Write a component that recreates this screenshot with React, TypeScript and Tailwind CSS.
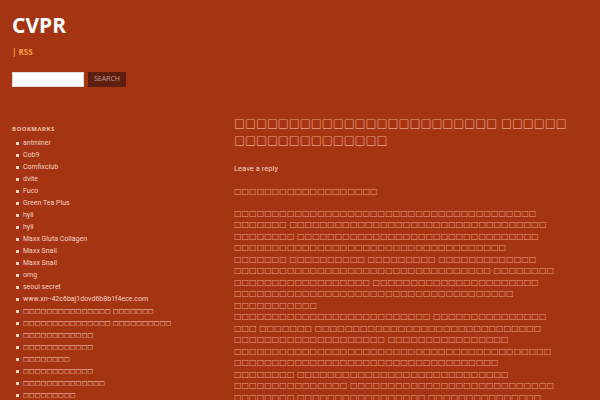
import React from 'react';

// the Thai text shows as missing-glyph boxes in the reference
const box = (...runs: number[]) => runs.map((n) => '□'.repeat(n)).join(' ');

const BOOKMARKS = [
  'antminer',
  'Cob9',
  'Comfixclub',
  'dvite',
  'Fuco',
  'Green Tea Plus',
  'hyli',
  'hyli',
  'Maxx Gluta Collagen',
  'Maxx Snail',
  'Maxx Snail',
  'omg',
  'seoul secret',
  'www.xn--42c6baj1dovd6b8b1f4ece.com',
];

const THAI_BOOKMARKS = [box(15, 7), box(15, 10), box(12), box(12), box(8), box(12), box(14), box(9)];

const BODY_LINES = [
  box(40),
  box(7, 34),
  box(8, 32),
  box(36),
  box(7, 10, 9, 13),
  box(34, 8),
  box(18, 22),
  box(37),
  box(11),
  box(26, 15),
  box(3, 7, 30),
  box(20, 16),
  box(42),
  box(35),
  box(8, 28),
  box(15, 27),
  box(8, 17, 15),
];

export default function App() {
  return (
    <div className="w-[600px] h-[400px] overflow-hidden bg-[#a53412] text-[#f3d3c2]" style={{ fontFamily: '"Open Sans", "DejaVu Sans", sans-serif' }}>
      <div className="px-3 pt-[12px]">
        <h1 className="text-[21px] leading-[26px] font-bold text-white">CVPR</h1>
        <div className="mt-[8px] text-[8px] leading-[11px] font-bold text-[#f7a142]">| RSS</div>
        <form className="mt-[15px] flex gap-1">
          <input className="w-[72px] h-[15px] bg-white border border-[#ddd]" />
          <button type="button" className="w-[38px] h-[15px] bg-[#5e1f10] text-[7px] text-[#c49a90]">SEARCH</button>
        </form>
      </div>
      <div className="flex mt-[28px]">
        <aside className="w-[234px] shrink-0 pl-3">
          <h3 className="mt-[9px] text-[6px] leading-[10px] font-bold tracking-[0.45px] text-[#f0c0a8]">BOOKMARKS</h3>
          <ul className="mt-[3px]">
            {BOOKMARKS.map((b, i) => (
              <li key={i} className="flex items-center h-[12px] text-[7px] font-['Roboto']">
                <span className="w-[3px] h-[3px] bg-[#f3d3c2] ml-1 mr-[4px]" />
                {b}
              </li>
            ))}
            {THAI_BOOKMARKS.map((b, i) => (
              <li key={i} className="flex items-center h-[12px] text-[6.2px] font-['DejaVu_Sans']">
                <span className="w-[3px] h-[3px] bg-[#f3d3c2] ml-1 mr-[4px]" />
                {b}
              </li>
            ))}
          </ul>
        </aside>
        <main className="flex-1 text-[#ec9f82] font-['DejaVu_Sans']">
          <h2 className="text-[11.5px] leading-[17px] tracking-[0.1px] whitespace-nowrap">
            {box(24, 6)}
            <br />
            {box(14)}
          </h2>
          <p className="mt-[14px] text-[7.6px] leading-[11px] text-[#f3d3c2] font-['Roboto']">Leave a reply</p>
          <p className="mt-[12px] text-[8px] leading-[11.5px]">{box(19)}</p>
          <p className="mt-[10px] text-[8px] leading-[11.5px] whitespace-nowrap">
            {BODY_LINES.map((l, i) => (
              <React.Fragment key={i}>
                {l}
                <br />
              </React.Fragment>
            ))}
          </p>
        </main>
      </div>
    </div>
  );
}
